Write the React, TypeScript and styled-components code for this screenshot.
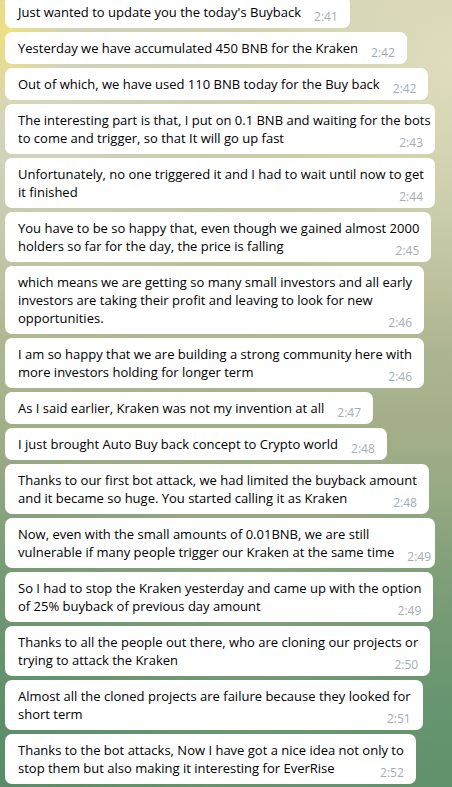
import React from "react";
import styled, { createGlobalStyle } from "styled-components";

const GlobalStyle = createGlobalStyle`
  html, body {
    margin: 0;
    padding: 0;
  }
  body {
    font-family: "Open Sans", "Noto Sans", "DejaVu Sans", sans-serif;
  }
`;

const Screen = styled.div`
  width: 452px;
  height: 787px;
  overflow: hidden;
  background:
    radial-gradient(ellipse 60px 90px at 8px 30px, rgba(244, 226, 120, 0.9), rgba(244, 226, 120, 0) 100%),
    radial-gradient(ellipse 260px 200px at 40px 120px, rgba(214, 216, 196, 0.9), rgba(214, 216, 196, 0) 100%),
    radial-gradient(ellipse 300px 260px at 452px 60px, rgba(222, 220, 188, 1), rgba(222, 220, 188, 0) 100%),
    radial-gradient(ellipse 320px 320px at 452px 800px, rgba(96, 146, 108, 1), rgba(96, 146, 108, 0) 100%),
    radial-gradient(ellipse 300px 360px at 0px 787px, rgba(88, 140, 104, 1), rgba(88, 140, 104, 0) 100%),
    linear-gradient(180deg, #cfcfae 0%, #b9bd98 35%, #a2ae88 55%, #86a27c 78%, #6c9672 100%);
`;

const Feed = styled.div`
  display: flex;
  flex-direction: column;
  align-items: flex-start;
  gap: 4px;
  margin-top: -4px;
  padding-left: 5px;
`;

const Bubble = styled.div`
  display: flex;
  flex-direction: column;
  max-width: 430px;
  box-sizing: border-box;
  padding: 7px 12px 7px 13px;
  background: #ffffff;
  border-radius: 7px;
  color: #000000;
  font-size: 13px;
  line-height: 18px;
  white-space: nowrap;
`;

const Line = styled.div``;

const LastLine = styled.div`
  display: flex;
  align-items: flex-start;
  justify-content: space-between;
  gap: 13px;
`;

const Time = styled.span`
  margin-top: 5px;
  margin-bottom: -5px;
  color: #a3adb5;
  font-size: 12px;
  line-height: 18px;
`;

interface Message {
  lines: string[];
  time: string;
}

const messages: Message[] = [
  { lines: ["Just wanted to update you the today's Buyback"], time: "2:41" },
  { lines: ["Yesterday we have accumulated 450 BNB for the Kraken"], time: "2:42" },
  { lines: ["Out of which, we have used 110 BNB today for the Buy back"], time: "2:42" },
  {
    lines: [
      "The interesting part is that, I put on 0.1 BNB and waiting for the bots",
      "to come and trigger, so that It will go up fast",
    ],
    time: "2:43",
  },
  {
    lines: [
      "Unfortunately, no one triggered it and I had to wait until now to get",
      "it finished",
    ],
    time: "2:44",
  },
  {
    lines: [
      "You have to be so happy that, even though we gained almost 2000",
      "holders so far for the day, the price is falling",
    ],
    time: "2:45",
  },
  {
    lines: [
      "which means we are getting so many small investors and all early",
      "investors are taking their profit and leaving to look for new",
      "opportunities.",
    ],
    time: "2:46",
  },
  {
    lines: [
      "I am so happy that we are building a strong community here with",
      "more investors holding for longer term",
    ],
    time: "2:46",
  },
  { lines: ["As I said earlier, Kraken was not my invention at all"], time: "2:47" },
  { lines: ["I just brought Auto Buy back concept to Crypto world"], time: "2:48" },
  {
    lines: [
      "Thanks to our first bot attack, we had limited the buyback amount",
      "and it became so huge. You started calling it as Kraken",
    ],
    time: "2:48",
  },
  {
    lines: [
      "Now, even with the small amounts of 0.01BNB, we are still",
      "vulnerable if many people trigger our Kraken at the same time",
    ],
    time: "2:49",
  },
  {
    lines: [
      "So I had to stop the Kraken yesterday and came up with the option",
      "of 25% buyback of previous day amount",
    ],
    time: "2:49",
  },
  {
    lines: [
      "Thanks to all the people out there, who are cloning our projects or",
      "trying to attack the Kraken",
    ],
    time: "2:50",
  },
  {
    lines: [
      "Almost all the cloned projects are failure because they looked for",
      "short term",
    ],
    time: "2:51",
  },
  {
    lines: [
      "Thanks to the bot attacks, Now I have got a nice idea not only to",
      "stop them but also making it interesting for EverRise",
    ],
    time: "2:52",
  },
];

const ChatMessage: React.FC<{ message: Message }> = ({ message }) => {
  const head = message.lines.slice(0, -1);
  const last = message.lines[message.lines.length - 1];
  return (
    <Bubble>
      {head.map((line, i) => (
        <Line key={i}>{line}</Line>
      ))}
      <LastLine>
        <span>{last}</span>
        <Time>{message.time}</Time>
      </LastLine>
    </Bubble>
  );
};

const App: React.FC = () => {
  return (
    <>
      <GlobalStyle />
      <Screen>
        <Feed>
          {messages.map((m, i) => (
            <ChatMessage key={i} message={m} />
          ))}
        </Feed>
      </Screen>
    </>
  );
};

export default App;
